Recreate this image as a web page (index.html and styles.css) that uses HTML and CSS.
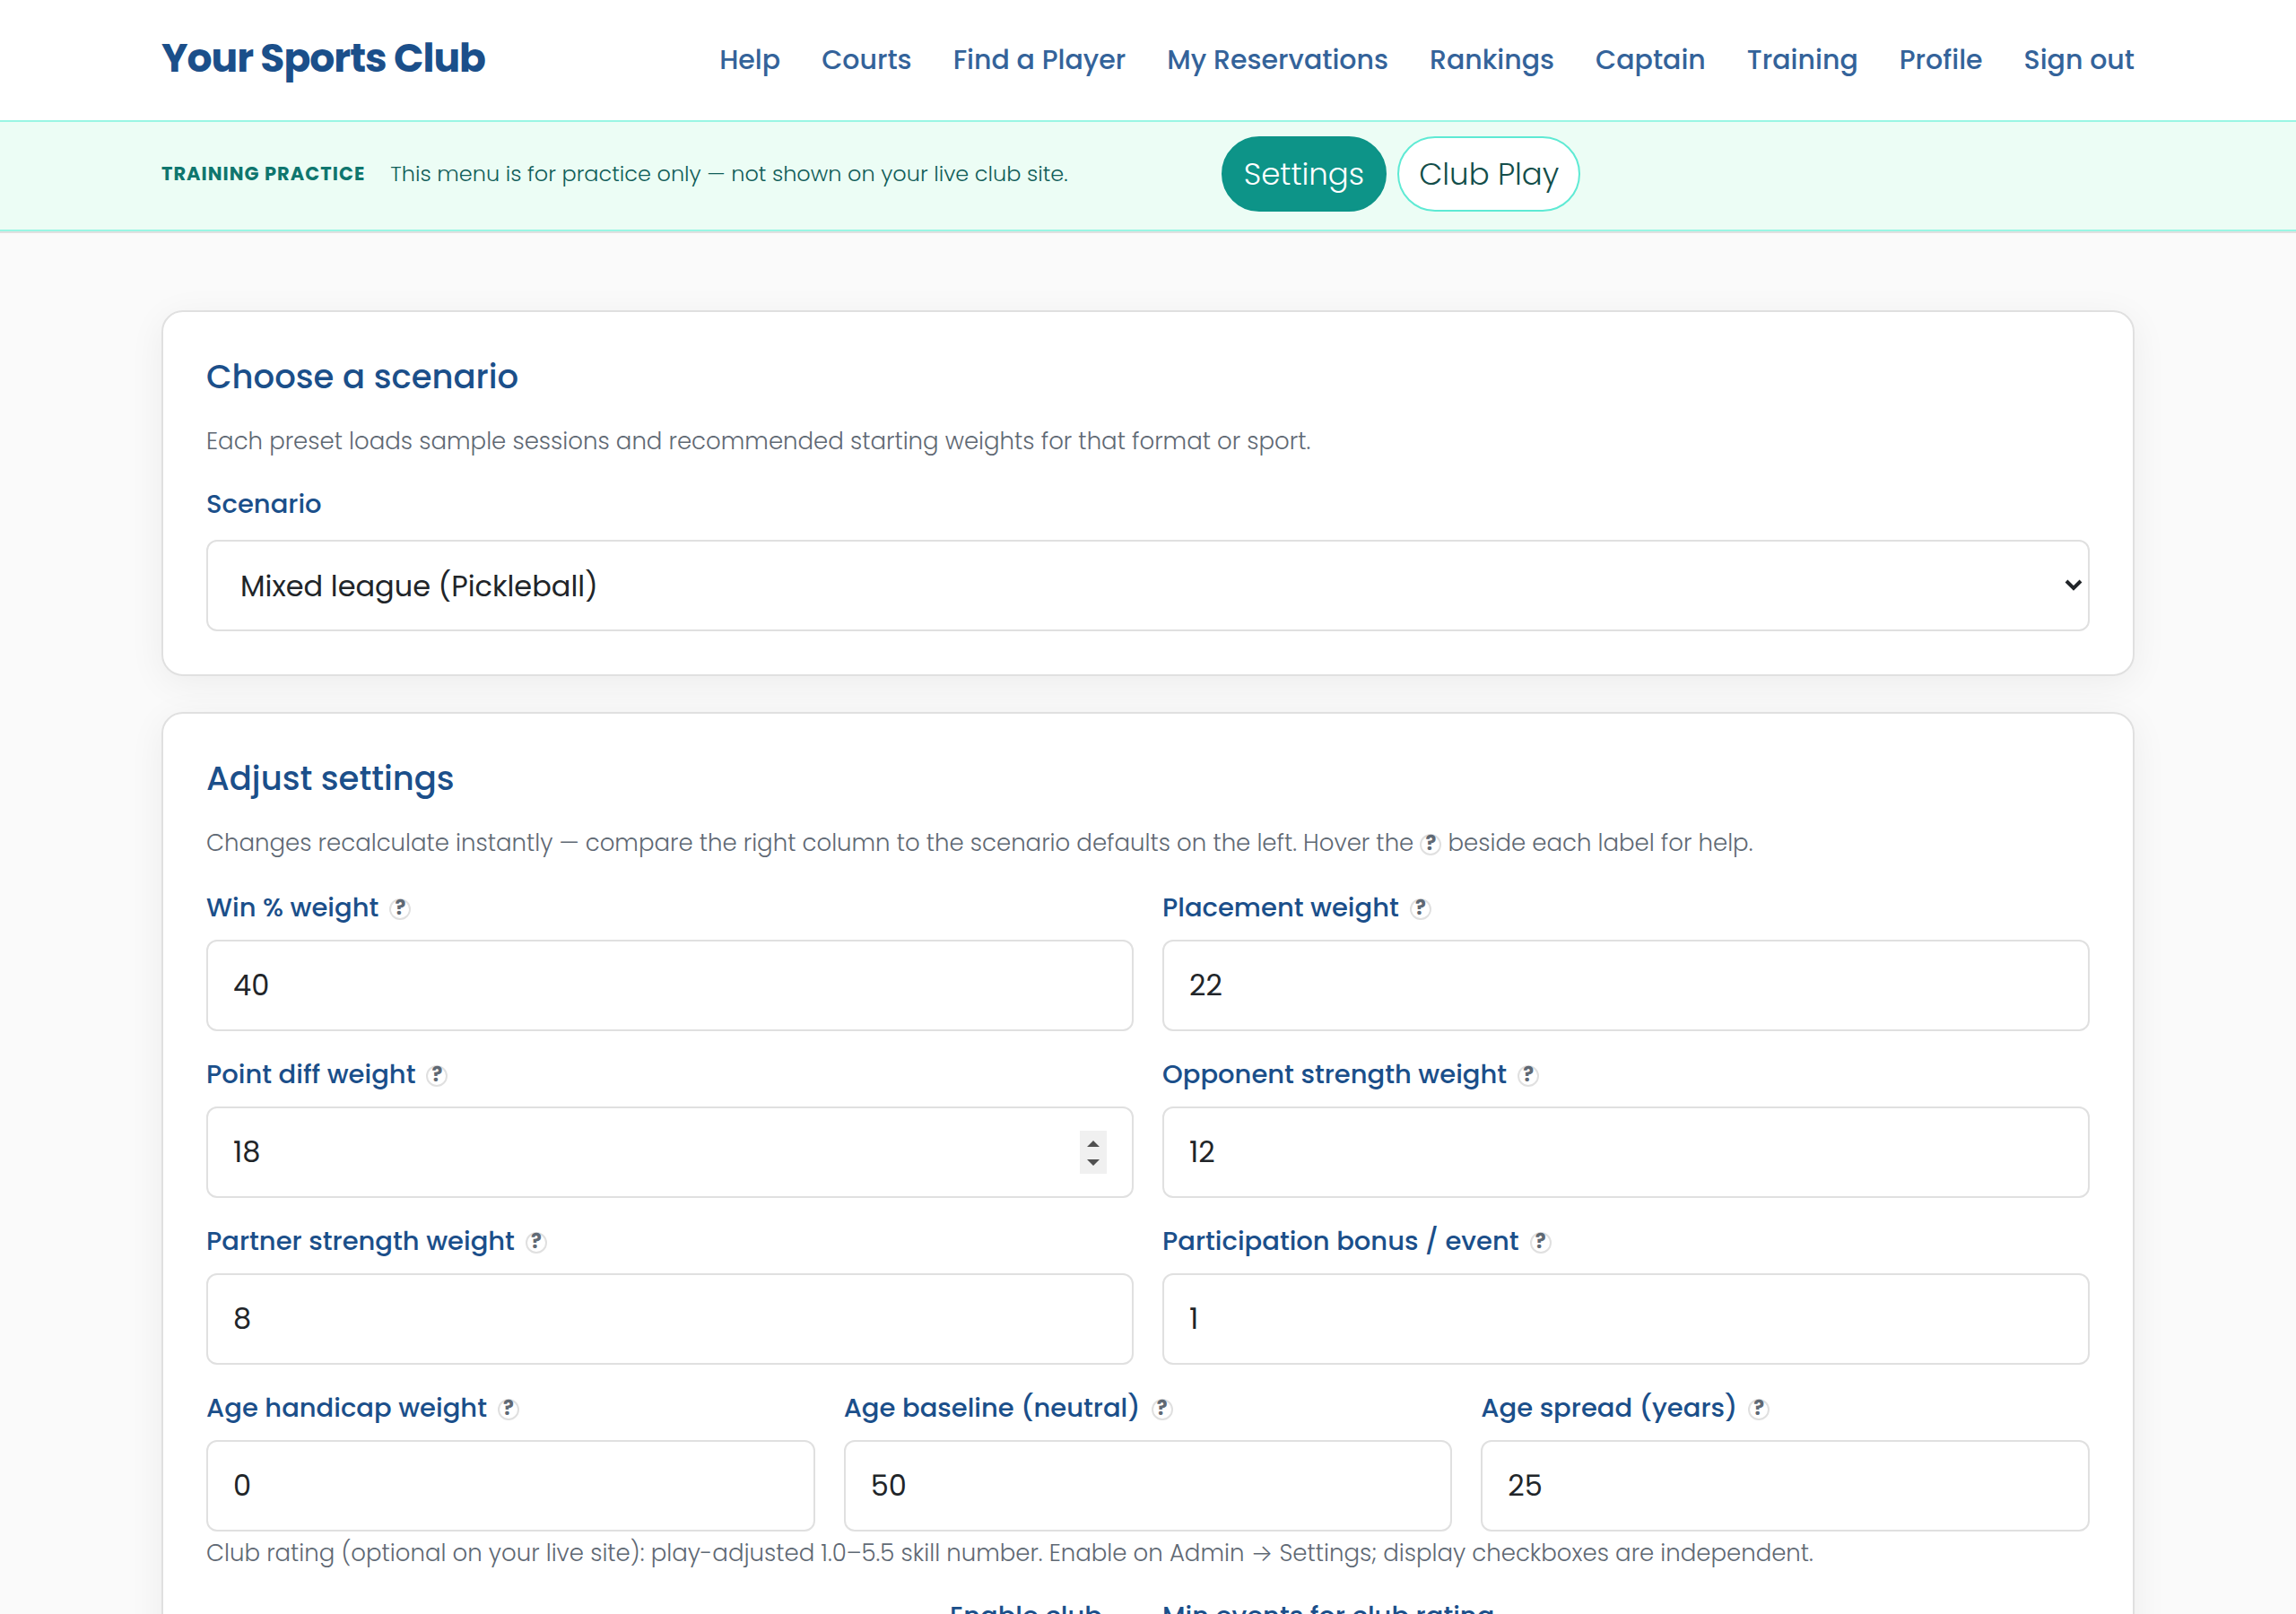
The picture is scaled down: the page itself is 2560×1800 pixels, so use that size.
FILE: index.html
```html
<!DOCTYPE html>
<html lang="en">
<head>
  <meta charset="utf-8">
  <meta name="viewport" content="width=device-width, initial-scale=1">
  <title>Settings - Training</title>
  <link rel="stylesheet" href="styles.css">
</head>
<body>
  <header class="site-header">
    <div class="container header-row">
      <a class="brand" href="#">Your Sports Club</a>
      <nav class="main-nav">
        <a href="#">Help</a>
        <a href="#">Courts</a>
        <a href="#">Find a Player</a>
        <a href="#">My Reservations</a>
        <a href="#">Rankings</a>
        <a href="#">Captain</a>
        <a href="#">Training</a>
        <a href="#">Profile</a>
        <a href="#">Sign out</a>
      </nav>
    </div>
    <div class="training-bar">
      <div class="container training-row">
        <div class="training-info">
          <strong class="training-label">Training practice</strong>
          <span class="training-text">This menu is for practice only — not shown on your live club site.</span>
        </div>
        <nav class="training-nav">
          <a class="pill active" href="#">Settings</a>
          <a class="pill" href="#">Club Play</a>
        </nav>
      </div>
    </div>
  </header>

  <main class="container page">
    <section class="card">
      <h2>Choose a scenario</h2>
      <p class="muted">Each preset loads sample sessions and recommended starting weights for that format or sport.</p>
      <div class="field scenario-field">
        <div class="field-label"><label for="scenario">Scenario</label></div>
        <select id="scenario" class="control">
          <option>Mixed league (Pickleball)</option>
        </select>
      </div>
    </section>

    <section class="card">
      <h2>Adjust settings</h2>
      <p class="muted">Changes recalculate instantly — compare the right column to the scenario defaults on the left. Hover the <span class="tip">?</span> beside each label for help.</p>
      <div class="grid">
        <div class="field">
          <div class="field-label"><label for="win">Win % weight</label><span class="tip">?</span></div>
          <input id="win" class="control" type="number" value="40">
        </div>
        <div class="field">
          <div class="field-label"><label for="placement">Placement weight</label><span class="tip">?</span></div>
          <input id="placement" class="control" type="number" value="22">
        </div>
        <div class="field">
          <div class="field-label"><label for="diff">Point diff weight</label><span class="tip">?</span></div>
          <input id="diff" class="control show-spin" type="number" value="18">
        </div>
        <div class="field">
          <div class="field-label"><label for="opponent">Opponent strength weight</label><span class="tip">?</span></div>
          <input id="opponent" class="control" type="number" value="12">
        </div>
        <div class="field">
          <div class="field-label"><label for="partner">Partner strength weight</label><span class="tip">?</span></div>
          <input id="partner" class="control" type="number" value="8">
        </div>
        <div class="field">
          <div class="field-label"><label for="bonus">Participation bonus / event</label><span class="tip">?</span></div>
          <input id="bonus" class="control" type="number" value="1">
        </div>
      </div>
      <div class="grid grid-3">
        <div class="field">
          <div class="field-label"><label for="age-weight">Age handicap weight</label><span class="tip">?</span></div>
          <input id="age-weight" class="control" type="number" value="0">
        </div>
        <div class="field">
          <div class="field-label"><label for="age-base">Age baseline (neutral)</label><span class="tip">?</span></div>
          <input id="age-base" class="control" type="number" value="50">
        </div>
        <div class="field">
          <div class="field-label"><label for="age-spread">Age spread (years)</label><span class="tip">?</span></div>
          <input id="age-spread" class="control" type="number" value="25">
        </div>
      </div>
      <p class="muted rating-note">Club rating (optional on your live site): play-adjusted 1.0–5.5 skill number. Enable on Admin → Settings; display checkboxes are independent.</p>
      <div class="grid">
        <div class="check-field">
          <input id="enable-rating" type="checkbox">
          <label for="enable-rating">Enable club<br>rating</label>
        </div>
        <div class="field">
          <div class="field-label"><label for="min-events">Min events for club rating</label></div>
          <input id="min-events" class="control" type="number" value="3">
        </div>
      </div>
    </section>
  </main>
</body>
</html>
```

FILE: styles.css
```css
* {
  box-sizing: border-box;
}

body {
  margin: 0;
  font-family: Poppins, Inter, "Liberation Sans", sans-serif;
  font-size: 34px;
  line-height: 48px;
  color: #212529;
  background: #fafafa;
}

a {
  text-decoration: none;
}

.container {
  max-width: 2280px;
  margin: 0 auto;
  padding: 0 40px;
}

/* header */
.site-header {
  background: #fff;
  border-bottom: 2px solid #e0e0e0;
}

.header-row {
  display: flex;
  align-items: center;
  justify-content: space-between;
  min-height: 134px;
}

.brand {
  padding-bottom: 4px;
  font-size: 44px;
  font-weight: 700;
  letter-spacing: -1px;
  color: #1b4f8a;
}

.main-nav {
  display: flex;
  gap: 46px;
}

.main-nav a {
  font-size: 30px;
  font-weight: 500;
  color: #34639a;
}

/* training bar */
.training-bar {
  background: #ecfdf5;
  border-top: 2px solid #99f6e4;
  border-bottom: 2px solid #99f6e4;
}

.training-row {
  display: grid;
  grid-template-columns: 8fr 7fr;
  gap: 18px;
  align-items: center;
  padding-top: 16px;
  padding-bottom: 20px;
}

.training-info {
  display: flex;
  align-items: center;
  gap: 28px;
}

.training-label {
  font-size: 21px;
  font-weight: 700;
  letter-spacing: 1px;
  text-transform: uppercase;
  color: #0f766e;
}

.training-text {
  font-size: 24px;
  font-weight: 300;
  color: #115e59;
}

.training-nav {
  display: flex;
  gap: 12px;
}

.pill {
  padding: 16px 22px;
  border: 2px solid #5eead4;
  border-radius: 42px;
  font-weight: 300;
  color: #134e4a;
  background: #fff;
}

.pill.active {
  padding: 16px 23px;
  border-color: #0d9488;
  color: #fff;
  background: #0d9488;
}

/* cards */
.page {
  padding-top: 86px;
  padding-bottom: 80px;
}

.card {
  margin-bottom: 40px;
  padding: 48px;
  border: 2px solid #e0e0e0;
  border-radius: 24px;
  background: #fff;
  box-shadow: 0 8px 40px rgba(0, 0, 0, 0.06);
}

.card h2 {
  margin: 0 0 24px;
  font-size: 37px;
  font-weight: 500;
  line-height: 48px;
  color: #1b4f8a;
}

.muted {
  margin: 0 0 28px;
  font-size: 26px;
  font-weight: 300;
  line-height: 48px;
  color: #5f6974;
}

.rating-note {
  margin-bottom: 26px;
}

/* form */
.grid {
  display: grid;
  grid-template-columns: 1fr 1fr;
  gap: 28px 32px;
}

.grid-3 {
  grid-template-columns: 1fr 1fr 1fr;
  margin-top: 28px;
}

.field-label {
  display: flex;
  align-items: center;
  gap: 12px;
  height: 40px;
  margin-bottom: 16px;
  font-size: 29px;
  font-weight: 500;
  line-height: 40px;
  color: #1b4f8a;
}

.scenario-field .field-label {
  height: 36px;
  margin-bottom: 22px;
}

.tip {
  display: inline-flex;
  align-items: center;
  justify-content: center;
  width: 24px;
  height: 24px;
  padding-bottom: 2px;
  border: 2px solid #e0e0e0;
  border-radius: 50%;
  font-size: 22px;
  font-weight: 700;
  line-height: 18px;
  vertical-align: middle;
  color: #5f6974;
  background: #fff;
}

.field-label .tip {
  margin-top: 4px;
}

.control {
  display: block;
  width: 100%;
  height: 102px;
  padding: 0 28px;
  border: 2px solid #e0e0e0;
  border-radius: 12px;
  font-family: inherit;
  font-size: 32px;
  color: #212529;
  background: #fff;
}

select.control {
  padding: 0 36px;
  appearance: none;
  background: #fff url("data:image/svg+xml,%3Csvg xmlns='http://www.w3.org/2000/svg' viewBox='0 0 20 14'%3E%3Cpath d='M2 2l8 8 8-8' fill='none' stroke='%23212529' stroke-width='4'/%3E%3C/svg%3E") no-repeat right 6px center / 20px 14px;
}

.control::-webkit-inner-spin-button {
  appearance: none;
  width: 30px;
  height: 48px;
  margin: 0;
  opacity: 0;
  background: #f0f0f0 url("data:image/svg+xml,%3Csvg xmlns='http://www.w3.org/2000/svg' viewBox='0 0 30 48'%3E%3Cpath d='M8 18l7-7 7 7zM8 32l7 7 7-7z' fill='%23505050'/%3E%3C/svg%3E") no-repeat center / 30px 48px;
}

.control:hover::-webkit-inner-spin-button,
.show-spin::-webkit-inner-spin-button {
  opacity: 1;
}

.check-field {
  display: flex;
  align-items: flex-start;
  gap: 16px;
  font-size: 29px;
  font-weight: 500;
  line-height: 40px;
  color: #1b4f8a;
}

.check-field input {
  flex: 1;
  height: 36px;
  margin: 60px 0 0;
}

.check-field label {
  width: 205px;
}
```
